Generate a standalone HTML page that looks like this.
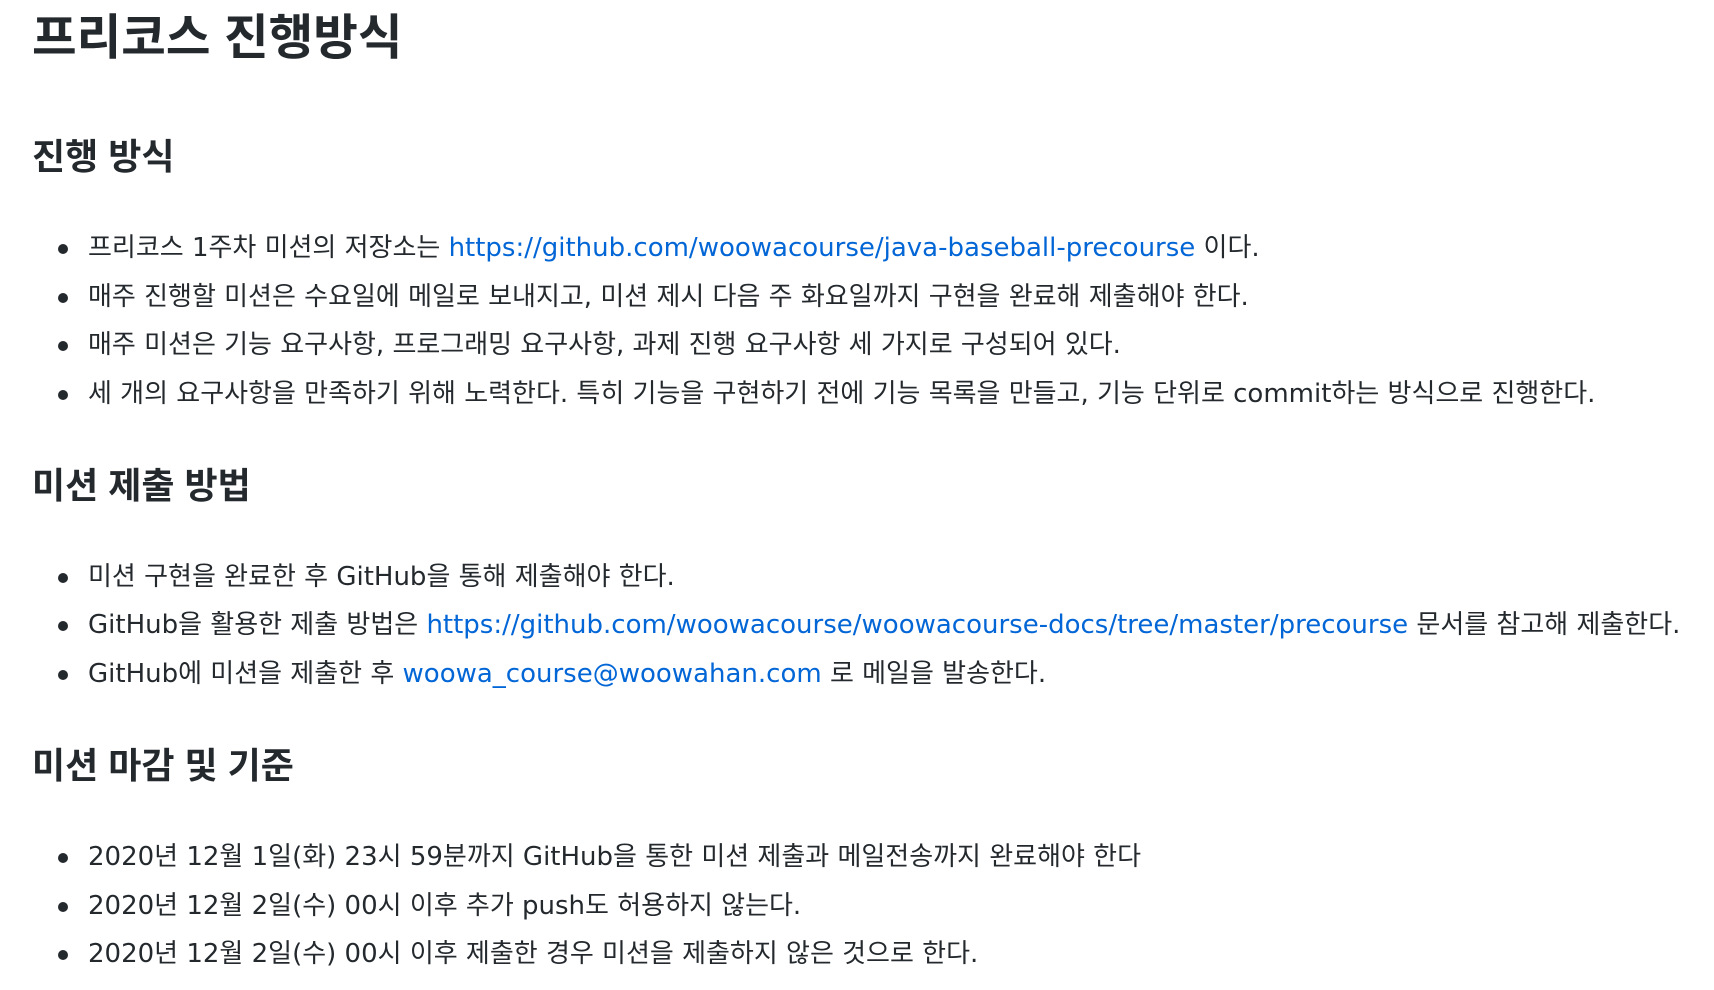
<!DOCTYPE html>
<html><head><meta charset="utf-8"><style>
body{margin:0;background:#fff;color:#24292e;font-family:"Liberation Sans","Noto Sans CJK KR",sans-serif;width:1714px;height:990px;overflow:hidden}
.w{padding-left:32px}
h1{margin:0;font-size:48.5px;line-height:76px;height:76px;font-weight:700}
h2{margin:56px 0 0;font-size:36px;line-height:50px;font-weight:700}
h2.n{margin-top:42px}
ul{margin:42px 0 0;padding-left:56px;font-size:26px;white-space:nowrap;list-style:none;font-family:"DejaVu Sans","Noto Sans CJK KR",sans-serif}
li{line-height:48.7px;height:48.7px;position:relative}
li::before{content:"";position:absolute;left:-30px;top:20px;width:10px;height:10px;border-radius:50%;background:#24292e}
a{color:#0366d6;text-decoration:none}
</style></head><body><div class="w">
<h1>프리코스 진행방식</h1>
<h2>진행 방식</h2>
<ul>
<li>프리코스 1주차 미션의 저장소는 <a>https://github.com/woowacourse/java-baseball-precourse</a> 이다.</li>
<li>매주 진행할 미션은 수요일에 메일로 보내지고, 미션 제시 다음 주 화요일까지 구현을 완료해 제출해야 한다.</li>
<li>매주 미션은 기능 요구사항, 프로그래밍 요구사항, 과제 진행 요구사항 세 가지로 구성되어 있다.</li>
<li>세 개의 요구사항을 만족하기 위해 노력한다. 특히 기능을 구현하기 전에 기능 목록을 만들고, 기능 단위로 commit하는 방식으로 진행한다.</li>
</ul>
<h2 class="n">미션 제출 방법</h2>
<ul>
<li>미션 구현을 완료한 후 GitHub을 통해 제출해야 한다.</li>
<li>GitHub을 활용한 제출 방법은 <a>https://github.com/woowacourse/woowacourse-docs/tree/master/precourse</a> 문서를 참고해 제출한다.</li>
<li>GitHub에 미션을 제출한 후 <a>woowa_course@woowahan.com</a> 로 메일을 발송한다.</li>
</ul>
<h2 class="n">미션 마감 및 기준</h2>
<ul>
<li>2020년 12월 1일(화) 23시 59분까지 GitHub을 통한 미션 제출과 메일전송까지 완료해야 한다</li>
<li>2020년 12월 2일(수) 00시 이후 추가 push도 허용하지 않는다.</li>
<li>2020년 12월 2일(수) 00시 이후 제출한 경우 미션을 제출하지 않은 것으로 한다.</li>
</ul>
</div></body></html>
